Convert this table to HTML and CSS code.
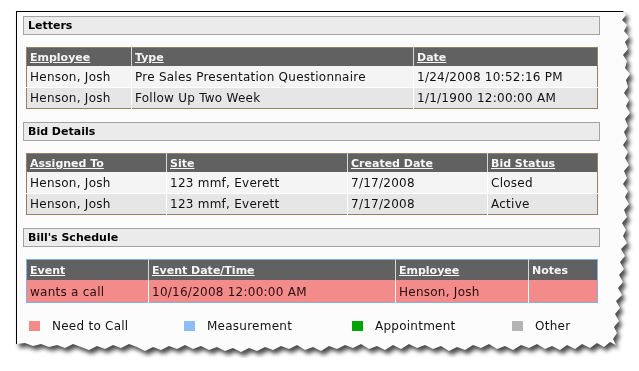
FILE: index.html
```html
<!DOCTYPE html>
<html>
<head>
<meta charset="utf-8">
<link rel="stylesheet" href="styles.css">
</head>
<body>
<div class="shadow">
  <div class="sheet">
    <div class="section-title">Letters</div>
    <table class="grid tan">
      <colgroup><col style="width:105px"><col style="width:282px"><col></colgroup>
      <tr class="head"><th><a>Employee</a></th><th><a>Type</a></th><th><a>Date</a></th></tr>
      <tr class="odd"><td>Henson, Josh</td><td>Pre Sales Presentation Questionnaire</td><td>1/24/2008 10:52:16 PM</td></tr>
      <tr class="even"><td>Henson, Josh</td><td>Follow Up Two Week</td><td>1/1/1900 12:00:00 AM</td></tr>
    </table>

    <div class="section-title">Bid Details</div>
    <table class="grid tan">
      <colgroup><col style="width:140px"><col style="width:181px"><col style="width:140px"><col></colgroup>
      <tr class="head"><th><a>Assigned To</a></th><th><a>Site</a></th><th><a>Created Date</a></th><th><a>Bid Status</a></th></tr>
      <tr class="odd"><td>Henson, Josh</td><td>123 mmf, Everett</td><td>7/17/2008</td><td>Closed</td></tr>
      <tr class="even"><td>Henson, Josh</td><td>123 mmf, Everett</td><td>7/17/2008</td><td>Active</td></tr>
    </table>

    <div class="section-title">Bill's Schedule</div>
    <table class="grid blue">
      <colgroup><col style="width:122px"><col style="width:247px"><col style="width:133px"><col></colgroup>
      <tr class="head"><th><a>Event</a></th><th><a>Event Date/Time</a></th><th><a>Employee</a></th><th>Notes</th></tr>
      <tr class="call"><td>wants a call</td><td>10/16/2008 12:00:00 AM</td><td>Henson, Josh</td><td></td></tr>
    </table>

    <div class="legend">
      <div class="legend-item"><span class="swatch sw-call"></span>Need to Call</div>
      <div class="legend-item"><span class="swatch sw-measure"></span>Measurement</div>
      <div class="legend-item"><span class="swatch sw-appt"></span>Appointment</div>
      <div class="legend-item"><span class="swatch sw-other"></span>Other</div>
    </div>
  </div>
</div>
</body>
</html>
```

FILE: styles.css
```css
html, body {
  margin: 0;
  padding: 0;
  background: #ffffff;
}
body {
  font-family: "DejaVu Sans", Verdana, sans-serif;
  color: #111;
}
.shadow {
  margin: 11px 0 0 16px;
  width: 619px;
  filter: drop-shadow(3px 4px 2px rgba(0,0,0,0.7));
}
.sheet {
  box-sizing: border-box;
  width: 619px;
  height: 347px;
  background: #fcfcfc;
  border-top: 1px solid #000;
  border-left: 1px solid #000;
  padding: 4px 0 0 6px;
  clip-path: polygon(0px 0px, 607px 0px, 610px 4px, 606px 9px, 611px 14px, 608px 20px, 613px 26px, 609px 31px, 612px 38px, 607px 44px, 611px 50px, 609px 57px, 614px 63px, 610px 69px, 612px 76px, 608px 82px, 613px 89px, 610px 95px, 614px 102px, 609px 108px, 612px 115px, 608px 121px, 611px 128px, 607px 134px, 612px 141px, 609px 147px, 613px 154px, 608px 160px, 611px 167px, 607px 173px, 612px 180px, 609px 186px, 613px 193px, 608px 199px, 611px 206px, 606px 212px, 610px 219px, 607px 225px, 611px 232px, 605px 238px, 609px 245px, 604px 251px, 608px 258px, 603px 264px, 607px 271px, 602px 277px, 606px 284px, 600px 290px, 604px 297px, 599px 303px, 603px 310px, 598px 316px, 601px 322px, 597px 328px, 600px 334px, 594px 331px, 588px 336px, 581px 332px, 574px 337px, 566px 333px, 559px 338px, 551px 334px, 544px 339px, 536px 335px, 529px 338px, 521px 333px, 513px 337px, 505px 334px, 497px 339px, 489px 335px, 481px 338px, 473px 333px, 465px 337px, 457px 334px, 449px 339px, 441px 336px, 433px 340px, 425px 335px, 417px 338px, 409px 334px, 401px 337px, 393px 333px, 385px 338px, 377px 334px, 369px 339px, 361px 335px, 353px 338px, 345px 333px, 337px 337px, 329px 334px, 321px 338px, 313px 335px, 305px 340px, 297px 336px, 289px 339px, 281px 334px, 273px 338px, 265px 335px, 257px 339px, 249px 336px, 241px 340px, 233px 337px, 225px 341px, 217px 337px, 209px 340px, 201px 336px, 193px 339px, 185px 335px, 177px 338px, 169px 334px, 161px 338px, 153px 335px, 145px 339px, 137px 336px, 129px 340px, 121px 336px, 113px 333px, 105px 337px, 97px 334px, 89px 338px, 81px 335px, 73px 339px, 65px 336px, 57px 333px, 49px 337px, 41px 334px, 33px 336px, 25px 333px, 17px 335px, 9px 332px, 0px 333px);
}
.section-title {
  box-sizing: border-box;
  width: 577px;
  height: 19px;
  line-height: 17px;
  background: #ebebeb;
  border: 1px solid #a3a3a3;
  padding-left: 4px;
  font-size: 11px;
  font-weight: bold;
  color: #000;
  margin-bottom: 12px;
}
.grid {
  width: 572px;
  margin-left: 3px;
  margin-bottom: 13px;
  border-collapse: collapse;
  table-layout: fixed;
}
.grid.tan { border: 1px solid #928262; }
.grid.blue { border: 1px solid #7fb1e2; margin-top: 1px; }
.grid th {
  height: 18px;
  padding: 0 3px;
  background: #616161;
  color: #f6f6f6;
  font-size: 11px;
  font-weight: bold;
  text-align: left;
  white-space: nowrap;
}
.grid.blue th { height: 20px; }
.grid th a {
  text-decoration: underline;
}
.grid th + th { border-left: 1px solid #d8d8d8; }
.grid td {
  height: 21px;
  padding: 0 3px;
  font-size: 12px;
  letter-spacing: 0.25px;
  white-space: nowrap;
  color: #111;
}
.grid tr.even td { height: 20px; border-top: 1px solid #ffffff; }
.grid td + td { border-left: 1px solid #ffffff; }
.odd td { background: #f4f4f4; }
.even td { background: #e6e6e6; }
.call td { background: #f38b8b; color: #2a0c0c; border-top: 1px solid #f38b8b; }
.legend {
  display: grid;
  grid-template-columns: 155px 168px 160px auto;
  padding: 3px 0 0 6px;
  font-size: 12px;
  letter-spacing: 0.25px;
  color: #111;
}
.legend-item {
  display: flex;
  align-items: center;
  height: 14px;
}
.swatch {
  display: inline-block;
  width: 11px;
  height: 10px;
  margin-right: 12px;
}
.sw-call { background: #f38b8b; }
.sw-measure { background: #8ebcf5; }
.sw-appt { background: #00a400; }
.sw-other { background: #b4b4b4; }
```
